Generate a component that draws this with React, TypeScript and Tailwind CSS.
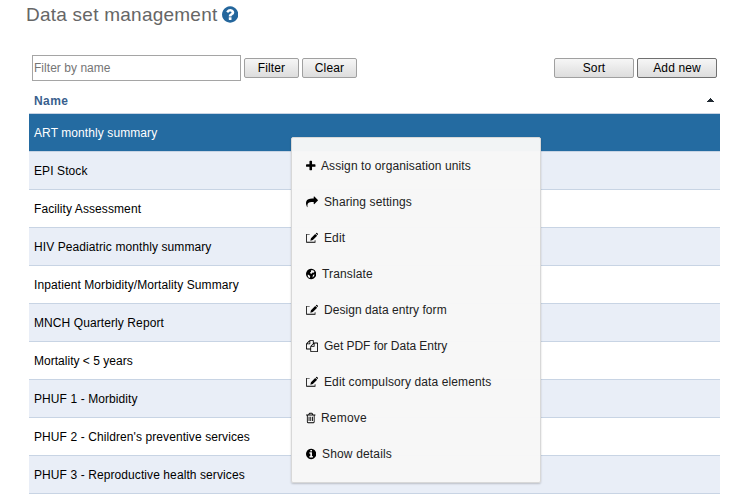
import React from "react";

const CIRCLE =
  "M1664 896q0 209-103 385.5t-279.5 279.5-385.5 103-385.5-103-279.5-279.5-103-385.5 103-385.5 279.5-279.5 385.5-103 385.5 103 279.5 279.5 103 385.5z";

const PATHS = {
  plus: "M1600 736v192q0 40-28 68t-68 28h-416v416q0 40-28 68t-68 28h-192q-40 0-68-28t-28-68v-416h-416q-40 0-68-28t-28-68v-192q0-40 28-68t68-28h416v-416q0-40 28-68t68-28h192q40 0 68 28t28 68v416h416q40 0 68 28t28 68z",
  share:
    "M1792 640q0 26-19 45l-512 512q-19 19-45 19t-45-19-19-45v-256h-224q-98 0-175.5 6t-154 21.5-133 42.5-105.5 69.5-80 101-48.5 138.5-17.5 181q0 55 5 123 0 6 2.5 23.5t2.5 26.5q0 15-8.5 25t-23.5 10q-16 0-28-17-7-9-13-22t-13.5-30-10.5-24q-127-285-127-451 0-199 53-333 162-403 875-403h224v-256q0-26 19-45t45-19 45 19l512 512q19 19 19 45z",
  edit: "M30 300h520v60H150v1100h1150v-220h110v350H30zM1370 290l300 260-640 640-380 130 90-370zM1450 210l90-75q60-30 110 10l130 130q40 50 0 100l-80 90z",
  globe: CIRCLE + "M860 330l330 0 190 190-70 200-200-30-130 160-190-20-60-150 150-120zM400 960l230 110 130 200-60 240-190-110-120-190zM1180 1010l230-40-100 270-220 160z",
  files:
    "M1696 384q40 0 68 28t28 68v1216q0 40-28 68t-68 28h-960q-40 0-68-28t-28-68v-288h-544q-40 0-68-28t-28-68v-672q0-40 20-88t48-76l408-408q28-28 76-48t88-20h416q40 0 68 28t28 68v328q68-40 128-40h416zm-544 213l-299 299h299v-299zm-640-384l-299 299h299v-299zm196 647l316-316v-416h-384v416q0 40-28 68t-68 28h-416v640h512v-256q0-40 20-88t48-76zm956 804v-1152h-384v416q0 40-28 68t-68 28h-416v640h896z",
  trash:
    "M704 736v576q0 14-9 23t-23 9h-64q-14 0-23-9t-9-23v-576q0-14 9-23t23-9h64q14 0 23 9t9 23zm256 0v576q0 14-9 23t-23 9h-64q-14 0-23-9t-9-23v-576q0-14 9-23t23-9h64q14 0 23 9t9 23zm256 0v576q0 14-9 23t-23 9h-64q-14 0-23-9t-9-23v-576q0-14 9-23t23-9h64q14 0 23 9t9 23zm128 724v-948h-896v948q0 22 7 40.5t14.5 27 10.5 8.5h832q3 0 10.5-8.5t14.5-27 7-40.5zm-672-1076h448l-48-117q-7-9-17-11h-317q-10 2-17 11zm928 32v64q0 14-9 23t-23 9h-96v948q0 83-47 143.5t-113 60.5h-832q-66 0-113-58.5t-47-141.5v-952h-96q-14 0-23-9t-9-23v-64q0-14 9-23t23-9h309l70-167q15-37 54-63t79-26h320q40 0 79 26t54 63l70 167h309q14 0 23 9t9 23z",
  info:
    "M1152 1376v-160q0-14-9-23t-23-9h-96v-512q0-14-9-23t-23-9h-320q-14 0-23 9t-9 23v160q0 14 9 23t23 9h96v320h-96q-14 0-23 9t-9 23v160q0 14 9 23t23 9h448q14 0 23-9t9-23zm-128-896v-160q0-14-9-23t-23-9h-192q-14 0-23 9t-9 23v160q0 14 9 23t23 9h192q14 0 23-9t9-23z" +
    CIRCLE,
  question:
    "M1024 1376v-192q0-14-9-23t-23-9h-192q-14 0-23 9t-9 23v192q0 14 9 23t23 9h192q14 0 23-9t9-23zm256-672q0-88-55.5-163t-138.5-116-170-41q-243 0-371 213-15 24 8 42l132 100q7 6 19 6 16 0 25-12 53-68 86-92 34-24 86-24 48 0 85.5 26t37.5 59q0 38-20 61t-68 45q-63 28-115.5 86.5t-52.5 125.5v36q0 14 9 23t23 9h192q14 0 23-9t9-23q0-19 21.5-49.5t54.5-49.5q32-18 49-28.5t46-35 44.5-48 28-60.5 12.5-81z" +
    CIRCLE,
};

type IconName = keyof typeof PATHS;

function Icon({ name, box = "0 0 1792 1792", className }: { name: IconName; box?: string; className: string }) {
  return (
    <svg viewBox={box} className={className} fill="currentColor" fillRule="evenodd" aria-hidden="true">
      <path d={PATHS[name]} />
    </svg>
  );
}

function Button({ className, children }: { className: string; children: React.ReactNode }) {
  return (
    <button
      className={`h-5 rounded-[2px] border bg-linear-to-b from-[#f6f6f6] to-[#dddddd] text-center text-xs leading-[18px] tracking-[0.13px] text-black ${className}`}
    >
      {children}
    </button>
  );
}

const rows = [
  "ART monthly summary",
  "EPI Stock",
  "Facility Assessment",
  "HIV Peadiatric monthly summary",
  "Inpatient Morbidity/Mortality Summary",
  "MNCH Quarterly Report",
  "Mortality < 5 years",
  "PHUF 1 - Morbidity",
  "PHUF 2 - Children's preventive services",
  "PHUF 3 - Reproductive health services",
];

const wide = "0 0 1792 1792";
const round = "128 0 1536 1792";

const actions: { icon: IconName; label: string; box: string; width: string; tracking: string }[] = [
  { icon: "plus", label: "Assign to organisation units", box: "192 0 1408 1792", width: "w-[9.5px] mr-[5.5px]", tracking: "tracking-[0.11px]" },
  { icon: "share", label: "Sharing settings", box: wide, width: "w-3 mr-1.5", tracking: "tracking-[0.11px]" },
  { icon: "edit", label: "Edit", box: wide, width: "w-3 mr-1.5", tracking: "tracking-[0.11px]" },
  { icon: "globe", label: "Translate", box: round, width: "w-[10.3px] mr-[5.7px]", tracking: "tracking-[0.15px]" },
  { icon: "edit", label: "Design data entry form", box: wide, width: "w-3 mr-1.5", tracking: "tracking-[0.06px]" },
  { icon: "files", label: "Get PDF for Data Entry", box: wide, width: "w-3 mr-1.5", tracking: "tracking-[-0.04px]" },
  { icon: "edit", label: "Edit compulsory data elements", box: wide, width: "w-3 mr-1.5", tracking: "tracking-[0.11px]" },
  { icon: "trash", label: "Remove", box: "192 0 1408 1792", width: "w-[9.5px] mr-[5.5px]", tracking: "tracking-[0.2px]" },
  { icon: "info", label: "Show details", box: round, width: "w-[10.3px] mr-[5.7px]", tracking: "tracking-[0.16px]" },
];

export default function App() {
  return (
    <main className="relative h-[494px] w-[744px] overflow-hidden bg-white font-['Liberation_Sans',Arial,sans-serif] text-xs text-black">
      <h1 className="flex h-[55px] items-start pt-[3px] pl-[26px] text-[19px] leading-6 tracking-[0.24px] text-[#666666]">
        <span>Data set management</span>
        <Icon name="question" box={round} className="mt-[2px] ml-[4.5px] h-[19px] w-[16.3px] text-[#24669c]" />
      </h1>

      <div className="flex h-[34px] items-start pr-[27px] pl-8">
        <input
          placeholder="Filter by name"
          className="h-[26px] w-[209px] border border-[#a5a5a5] px-px text-xs tracking-[0.04px] text-black outline-none placeholder:text-[#757575]"
        />
        <Button className="mt-[3px] ml-[3px] w-[55px] border-[#a0a0a0]">Filter</Button>
        <Button className="mt-[3px] ml-[3px] w-[55px] border-[#a0a0a0]">Clear</Button>
        <Button className="mt-[3px] ml-auto w-20 border-[#a0a0a0]">Sort</Button>
        <Button className="mt-[3px] ml-[3px] w-20 border-[#707070]">Add new</Button>
      </div>

      <section className="ml-[29px] w-[691px]">
        <header className="flex h-[25px] items-start justify-between border-b border-[#c8d4e4] pr-1.5 pl-[5px] text-xs leading-6 font-bold text-[#3a5f8d]">
          <span className="tracking-[0.4px]">Name</span>
          <svg viewBox="0 0 7 4" className="mt-[9px] h-1 w-[7px]" fill="#222b33" shapeRendering="crispEdges" aria-hidden="true">
            <path d="M3 0h1v1h1v1h1v1h1v1H0V3h1V2h1V1h1z" />
          </svg>
        </header>
        {rows.map((row, i) => (
          <div
            key={row}
            className={`h-[38px] border-b border-[#c8d4e4] pl-[5px] leading-[38px] ${row.startsWith("Mortality") ? "tracking-[0.02px]" : "tracking-[0.09px]"} ${
              i === 0 ? "bg-[#246ba1] text-white" : i % 2 ? "bg-[#e9eef7]" : "bg-white"
            }`}
          >
            {row}
          </div>
        ))}
      </section>

      <ul className="absolute top-[137px] left-[291px] h-[346px] w-[250px] rounded-[2px] border border-[#d8d8d8] bg-[#f7f7f7]/98 pt-2.5 shadow-[0_1px_2px_rgba(0,0,0,0.2)]">
        {actions.map((action) => (
          <li key={action.label} className="flex h-9 items-center pl-3.5 text-[#222222]">
            <Icon name={action.icon} box={action.box} className={`h-3 shrink-0 text-black ${action.width}`} />
            <span className={action.tracking}>{action.label}</span>
          </li>
        ))}
      </ul>
    </main>
  );
}
